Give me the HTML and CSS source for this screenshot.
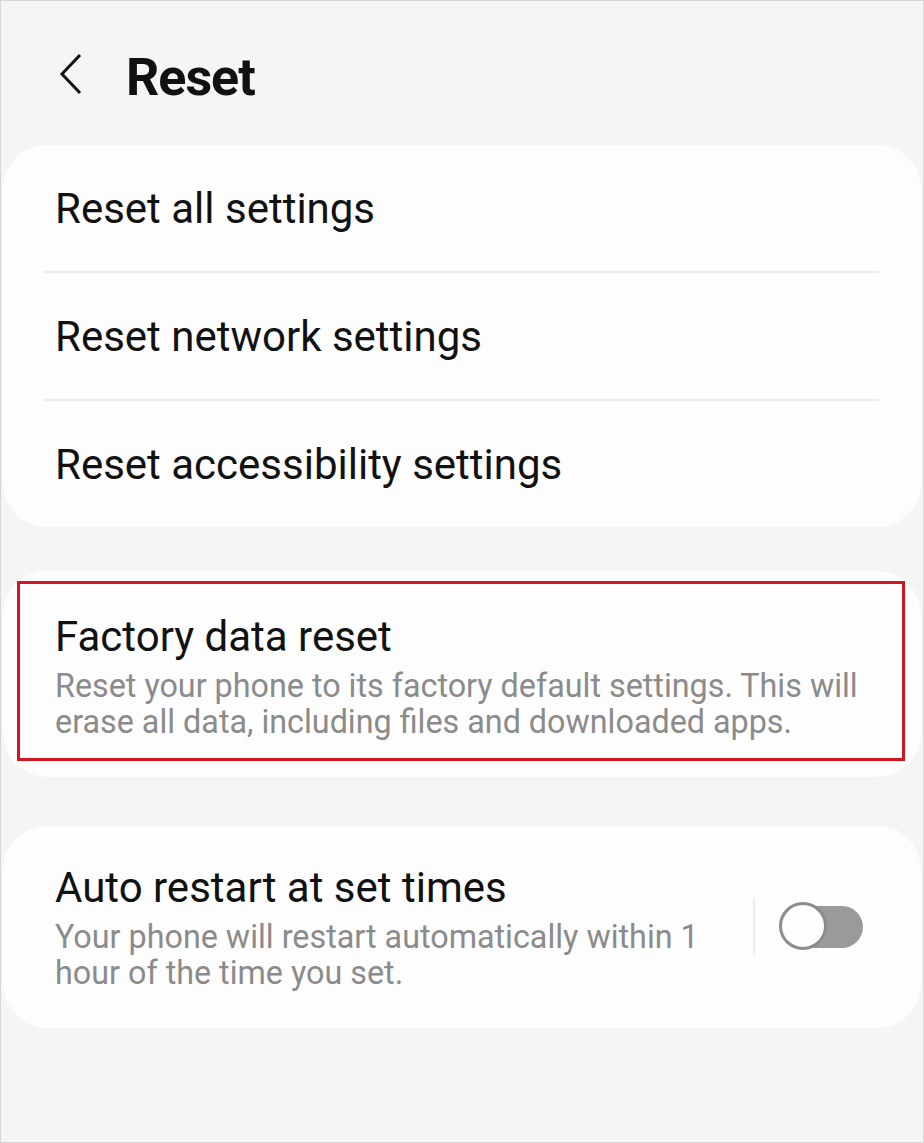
FILE: index.html
```html
<!DOCTYPE html>
<html>
<head>
  <title>Reset</title>
  <link rel="stylesheet" href="styles.css">
</head>
<body>
  <div class="screen">
    <div class="topbar">
      <svg class="back" width="26" height="44" viewBox="0 0 26 44">
        <path d="M22 3 L4 22 L22 41" fill="none" stroke="#111" stroke-width="3" stroke-linejoin="miter"/>
      </svg>
      <h1>Reset</h1>
    </div>

    <div class="card first">
      <div class="row">Reset all settings</div>
      <div class="divider"></div>
      <div class="row">Reset network settings</div>
      <div class="divider"></div>
      <div class="row">Reset accessibility settings</div>
    </div>

    <div class="card second">
      <div class="highlight">
        <div class="title">Factory data reset</div>
        <div class="desc">Reset your phone to its factory default settings. This will erase all data, including files and downloaded apps.</div>
      </div>
    </div>

    <div class="card third">
      <div class="text">
        <div class="title">Auto restart at set times</div>
        <div class="desc">Your phone will restart automatically within 1 hour of the time you set.</div>
      </div>
      <div class="vline"></div>
      <div class="switch">
        <div class="knob"></div>
      </div>
    </div>
  </div>
</body>
</html>
```

FILE: styles.css
```css
body {
  margin: 0;
  font-family: Roboto, "Noto Sans", sans-serif;
  color: #111;
}

.screen {
  box-sizing: border-box;
  width: 924px;
  height: 1143px;
  border: 1px solid #d9d4d6;
  background-color: #f5f5f5;
  padding: 0 2px;
}

.topbar {
  display: flex;
  align-items: flex-start;
  height: 144px;
  padding-left: 55px;
}

.back {
  margin-top: 51px;
}

h1 {
  margin: 46px 0 0 42px;
  font-size: 52px;
  line-height: normal;
  font-weight: 700;
  letter-spacing: -1px;
}

.card {
  background-color: #fdfdfd;
  border-radius: 44px;
}

.first {
  margin-bottom: 44px;
}

.row {
  display: flex;
  align-items: center;
  height: 126px;
  padding-left: 52px;
  font-size: 42px;
}

.divider {
  height: 2px;
  margin: 0 42px;
  background-color: #ebebeb;
}

.second {
  padding: 10px 16px 16px 14px;
  margin-bottom: 49px;
}

.highlight {
  border: 3px solid #d3161e;
  padding: 28px 35px 18px;
}

.title {
  font-size: 42px;
  line-height: 50px;
}

.desc {
  margin-top: 6px;
  font-size: 32.3px;
  line-height: 36px;
  color: #8b8b8b;
}

.third {
  display: flex;
  align-items: center;
  height: 202px;
  padding: 0 58px 0 52px;
  box-sizing: border-box;
}

.third .text {
  flex: 1;
  padding-right: 40px;
}

.vline {
  width: 2px;
  height: 56px;
  background-color: #ececec;
  margin-right: 26px;
}

.switch {
  position: relative;
  width: 82px;
  height: 42px;
  border-radius: 21px;
  background-color: #9a9a9a;
}

.knob {
  position: absolute;
  left: -2px;
  top: -4px;
  box-sizing: border-box;
  width: 48px;
  height: 48px;
  border-radius: 50%;
  border: 3px solid #8c8c8c;
  background-color: #fdfdfd;
}
```
